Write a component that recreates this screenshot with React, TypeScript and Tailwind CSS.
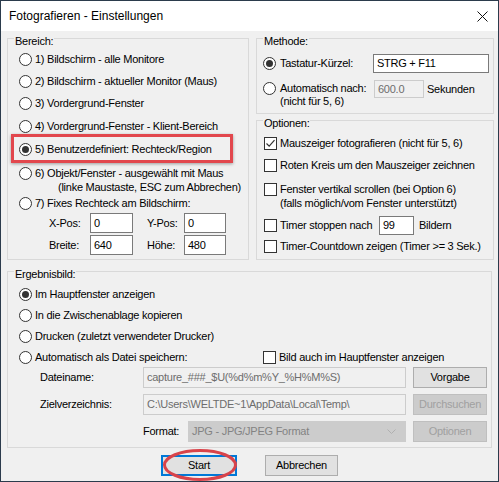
import React from "react";

const Radio = ({ checked = false }: { checked?: boolean }) => (
  <span className="w-[13px] h-[13px] shrink-0 rounded-full border border-[#333333] bg-white flex items-center justify-center">
    {checked && <span className="w-[7px] h-[7px] rounded-full bg-[#333333]" />}
  </span>
);

const Check = ({ checked = false }: { checked?: boolean }) => (
  <span className="w-[13px] h-[13px] shrink-0 border border-[#333333] bg-white flex items-center justify-center">
    {checked && (
      <svg width="11" height="11" viewBox="0 0 11 11">
        <path d="M1.5 5.5 L4.2 8.2 L9.5 2.2" fill="none" stroke="#333333" strokeWidth="1.2" />
      </svg>
    )}
  </span>
);

const Group = ({
  label,
  className,
  children,
}: {
  label: string;
  className: string;
  children: React.ReactNode;
}) => (
  <div className={"relative border border-[#d9d9d9] shrink-0 " + className}>
    <span className="absolute left-[6px] top-[-6px] bg-[#f0f0f0] px-[1px] leading-[16px]">{label}</span>
    {children}
  </div>
);

export default function App() {
  return (
    <div
      className="w-[499px] h-[482px] border border-[#2b3b4c] flex flex-col text-[11px] tracking-[-0.25px] text-black overflow-hidden whitespace-nowrap"
      style={{ fontFamily: "'Liberation Sans', Arial, sans-serif" }}
    >
      {/* Title bar */}
      <div className="h-[30px] bg-white flex items-center justify-between pl-[8px] pr-[10px] shrink-0">
        <span className="text-[12px] tracking-normal">Fotografieren - Einstellungen</span>
        <svg width="11" height="11" viewBox="0 0 11 11">
          <path d="M0.5 0.5 L10.5 10.5 M10.5 0.5 L0.5 10.5" stroke="#111111" strokeWidth="1" />
        </svg>
      </div>

      {/* Body */}
      <div className="flex-1 bg-[#f0f0f0] flex flex-col px-[6px]">
        <div className="flex gap-[7px] mt-[7px]">
          {/* Bereich */}
          <Group label="Bereich:" className="w-[242px] h-[222px]">
            <div className="flex flex-col pl-[11px] pt-[9px]">
              <div className="h-[22px] flex items-center gap-[3px]">
                <Radio />
                <span>1) Bildschirm - alle Monitore</span>
              </div>
              <div className="h-[22px] flex items-center gap-[3px]">
                <Radio />
                <span>2) Bildschirm - aktueller Monitor (Maus)</span>
              </div>
              <div className="h-[23px] flex items-center gap-[3px]">
                <Radio />
                <span>3) Vordergrund-Fenster</span>
              </div>
              <div className="h-[23px] flex items-center gap-[3px]">
                <Radio />
                <span>4) Vordergrund-Fenster - Klient-Bereich</span>
              </div>
              <div className="h-[23px] flex items-center gap-[3px] relative">
                <Radio checked />
                <span>5) Benutzerdefiniert: Rechteck/Region</span>
                <span className="absolute left-[-8px] top-[-4px] w-[222px] h-[29px] border-[3px] border-[#e2474d] shadow-[0_1px_3px_rgba(0,0,0,0.35)]" />
              </div>
              <div className="mt-[5px] h-[28px] flex items-start gap-[3px]">
                <span className="mt-[0.5px]">
                  <Radio />
                </span>
                <div className="leading-[14px]">
                  <div>6) Objekt/Fenster - ausgewählt mit Maus</div>
                  <div className="pl-[23px]">(linke Maustaste, ESC zum Abbrechen)</div>
                </div>
              </div>
              <div className="h-[19px] flex items-center gap-[3px]">
                <Radio />
                <span>7) Fixes Rechteck am Bildschirm:</span>
              </div>
              <div className="h-[20px] flex items-center pl-[30px]">
                <span className="w-[41px]">X-Pos:</span>
                <span className="w-[43px] h-[20px] bg-white border border-[#7a7a7a] px-[3px] leading-[18px]">0</span>
                <span className="w-[51px] pl-[14px]">Y-Pos:</span>
                <span className="w-[42px] h-[20px] bg-white border border-[#7a7a7a] px-[3px] leading-[18px]">0</span>
              </div>
              <div className="h-[20px] mt-[2px] flex items-center pl-[30px]">
                <span className="w-[41px]">Breite:</span>
                <span className="w-[43px] h-[20px] bg-white border border-[#7a7a7a] px-[3px] leading-[18px]">640</span>
                <span className="w-[51px] pl-[14px]">Höhe:</span>
                <span className="w-[42px] h-[20px] bg-white border border-[#7a7a7a] px-[3px] leading-[18px]">480</span>
              </div>
            </div>
          </Group>

          {/* Right column */}
          <div className="flex flex-col gap-[6px]">
            <Group label="Methode:" className="w-[238px] h-[76px]">
              <div className="flex flex-col pl-[6px]">
                <div className="mt-[15px] h-[19px] flex items-center">
                  <Radio checked />
                  <span className="ml-[4px] w-[93px]">Tastatur-Kürzel:</span>
                  <span className="w-[116px] h-[19px] bg-white border border-[#7a7a7a] px-[3px] leading-[17px]">
                    STRG + F11
                  </span>
                </div>
                <div className="mt-[7px] flex items-start">
                  <span className="mt-[2px]">
                    <Radio />
                  </span>
                  <div className="ml-[4px] w-[94px] leading-[13px] mt-[1.5px]">
                    <div>Automatisch nach:</div>
                    <div>(nicht für 5, 6)</div>
                  </div>
                  <span className="w-[50px] h-[18px] bg-[#f0f0f0] border border-[#cccccc] px-[3px] leading-[16px] text-[#6d6d6d]">
                    600.0
                  </span>
                  <span className="ml-[3px] leading-[18px]">Sekunden</span>
                </div>
              </div>
            </Group>

            <Group label="Optionen:" className="w-[238px] h-[140px]">
              <div className="flex flex-col pl-[7px] pt-[11px]">
                <div className="h-[22px] flex items-center gap-[3px]">
                  <Check checked />
                  <span>Mauszeiger fotografieren (nicht für 5, 6)</span>
                </div>
                <div className="h-[22px] flex items-center gap-[3px]">
                  <Check />
                  <span>Roten Kreis um den Mauszeiger zeichnen</span>
                </div>
                <div className="mt-[6px] h-[28px] flex items-start gap-[3px]">
                  <span className="mt-[0.5px]">
                    <Check />
                  </span>
                  <div className="leading-[14px]">
                    <div>Fenster vertikal scrollen (bei Option 6)</div>
                    <div>(falls möglich/vom Fenster unterstützt)</div>
                  </div>
                </div>
                <div className="mt-[6px] h-[19px] flex items-center">
                  <Check />
                  <span className="ml-[3px] w-[99px]">Timer stoppen nach</span>
                  <span className="w-[35px] h-[19px] bg-white border border-[#7a7a7a] px-[3px] leading-[17px]">99</span>
                  <span className="ml-[5px]">Bildern</span>
                </div>
                <div className="mt-[1px] h-[20px] flex items-center gap-[3px]">
                  <Check />
                  <span>Timer-Countdown zeigen (Timer &gt;= 3 Sek.)</span>
                </div>
              </div>
            </Group>
          </div>
        </div>

        {/* Ergebnisbild */}
        <Group label="Ergebnisbild:" className="w-[485px] h-[177px] mt-[11px]">
          <div className="flex flex-col pt-[11px]">
            <div className="h-[22px] flex items-center gap-[3px] pl-[11px]">
              <Radio checked />
              <span>Im Hauptfenster anzeigen</span>
            </div>
            <div className="h-[21px] flex items-center gap-[3px] pl-[11px]">
              <Radio />
              <span>In die Zwischenablage kopieren</span>
            </div>
            <div className="h-[21px] flex items-center gap-[3px] pl-[11px]">
              <Radio />
              <span>Drucken (zuletzt verwendeter Drucker)</span>
            </div>
            <div className="h-[20px] flex items-center pl-[11px]">
              <div className="w-[244px] flex items-center gap-[3px]">
                <Radio />
                <span>Automatisch als Datei speichern:</span>
              </div>
              <div className="flex items-center gap-[3px]">
                <Check />
                <span>Bild auch im Hauptfenster anzeigen</span>
              </div>
            </div>
            <div className="h-[21px] flex items-center pl-[32px]">
              <span className="w-[103px]">Dateiname:</span>
              <span className="w-[263px] h-[21px] bg-[#f0f0f0] border border-[#cccccc] px-[3px] leading-[19px] text-[#6d6d6d]">
                capture_###_$U(%d%m%Y_%H%M%S)
              </span>
              <span className="ml-[7px] w-[74px] h-[21px] bg-[#e1e1e1] border border-[#adadad] flex items-center justify-center">
                Vorgabe
              </span>
            </div>
            <div className="mt-[6px] h-[21px] flex items-center pl-[32px]">
              <span className="w-[103px]">Zielverzeichnis:</span>
              <span className="w-[263px] h-[21px] bg-[#f0f0f0] border border-[#cccccc] px-[3px] leading-[19px] text-[#6d6d6d] overflow-hidden">
                C:\Users\WELTDE~1\AppData\Local\Temp\
              </span>
              <span className="ml-[7px] w-[74px] h-[21px] bg-[#cccccc] border border-[#bfbfbf] flex items-center justify-center text-[#a0a0a0]">
                Durchsuchen
              </span>
            </div>
            <div className="mt-[6px] h-[21px] flex items-center pl-[135px]">
              <span className="w-[45px]">Format:</span>
              <span className="w-[218px] h-[21px] bg-[#cccccc] border border-[#cccccc] px-[3px] flex items-center justify-between text-[#838383]">
                <span>JPG - JPG/JPEG Format</span>
                <svg width="9" height="6" viewBox="0 0 9 6" className="mr-[6px]">
                  <path d="M0.5 0.5 L4.5 4.5 L8.5 0.5" fill="none" stroke="#b0b0b0" strokeWidth="1" />
                </svg>
              </span>
              <span className="ml-[7px] w-[74px] h-[21px] bg-[#cccccc] border border-[#bfbfbf] flex items-center justify-center text-[#a0a0a0]">
                Optionen
              </span>
            </div>
          </div>
        </Group>

        {/* Buttons */}
        <div className="mt-[7px] flex justify-center gap-[28px]">
          <div className="relative">
            <span className="w-[76px] h-[21px] bg-[#e1e1e1] border-2 border-[#0078d7] flex items-center justify-center">
              Start
            </span>
            <svg className="absolute left-[1px] top-[-7px]" width="76" height="34" viewBox="0 0 76 34">
              <ellipse cx="38" cy="17" rx="35.5" ry="14.5" fill="none" stroke="#d9434a" strokeWidth="3" />
            </svg>
          </div>
          <span className="w-[73px] h-[21px] bg-[#e1e1e1] border border-[#adadad] flex items-center justify-center">
            Abbrechen
          </span>
        </div>
      </div>
    </div>
  );
}
